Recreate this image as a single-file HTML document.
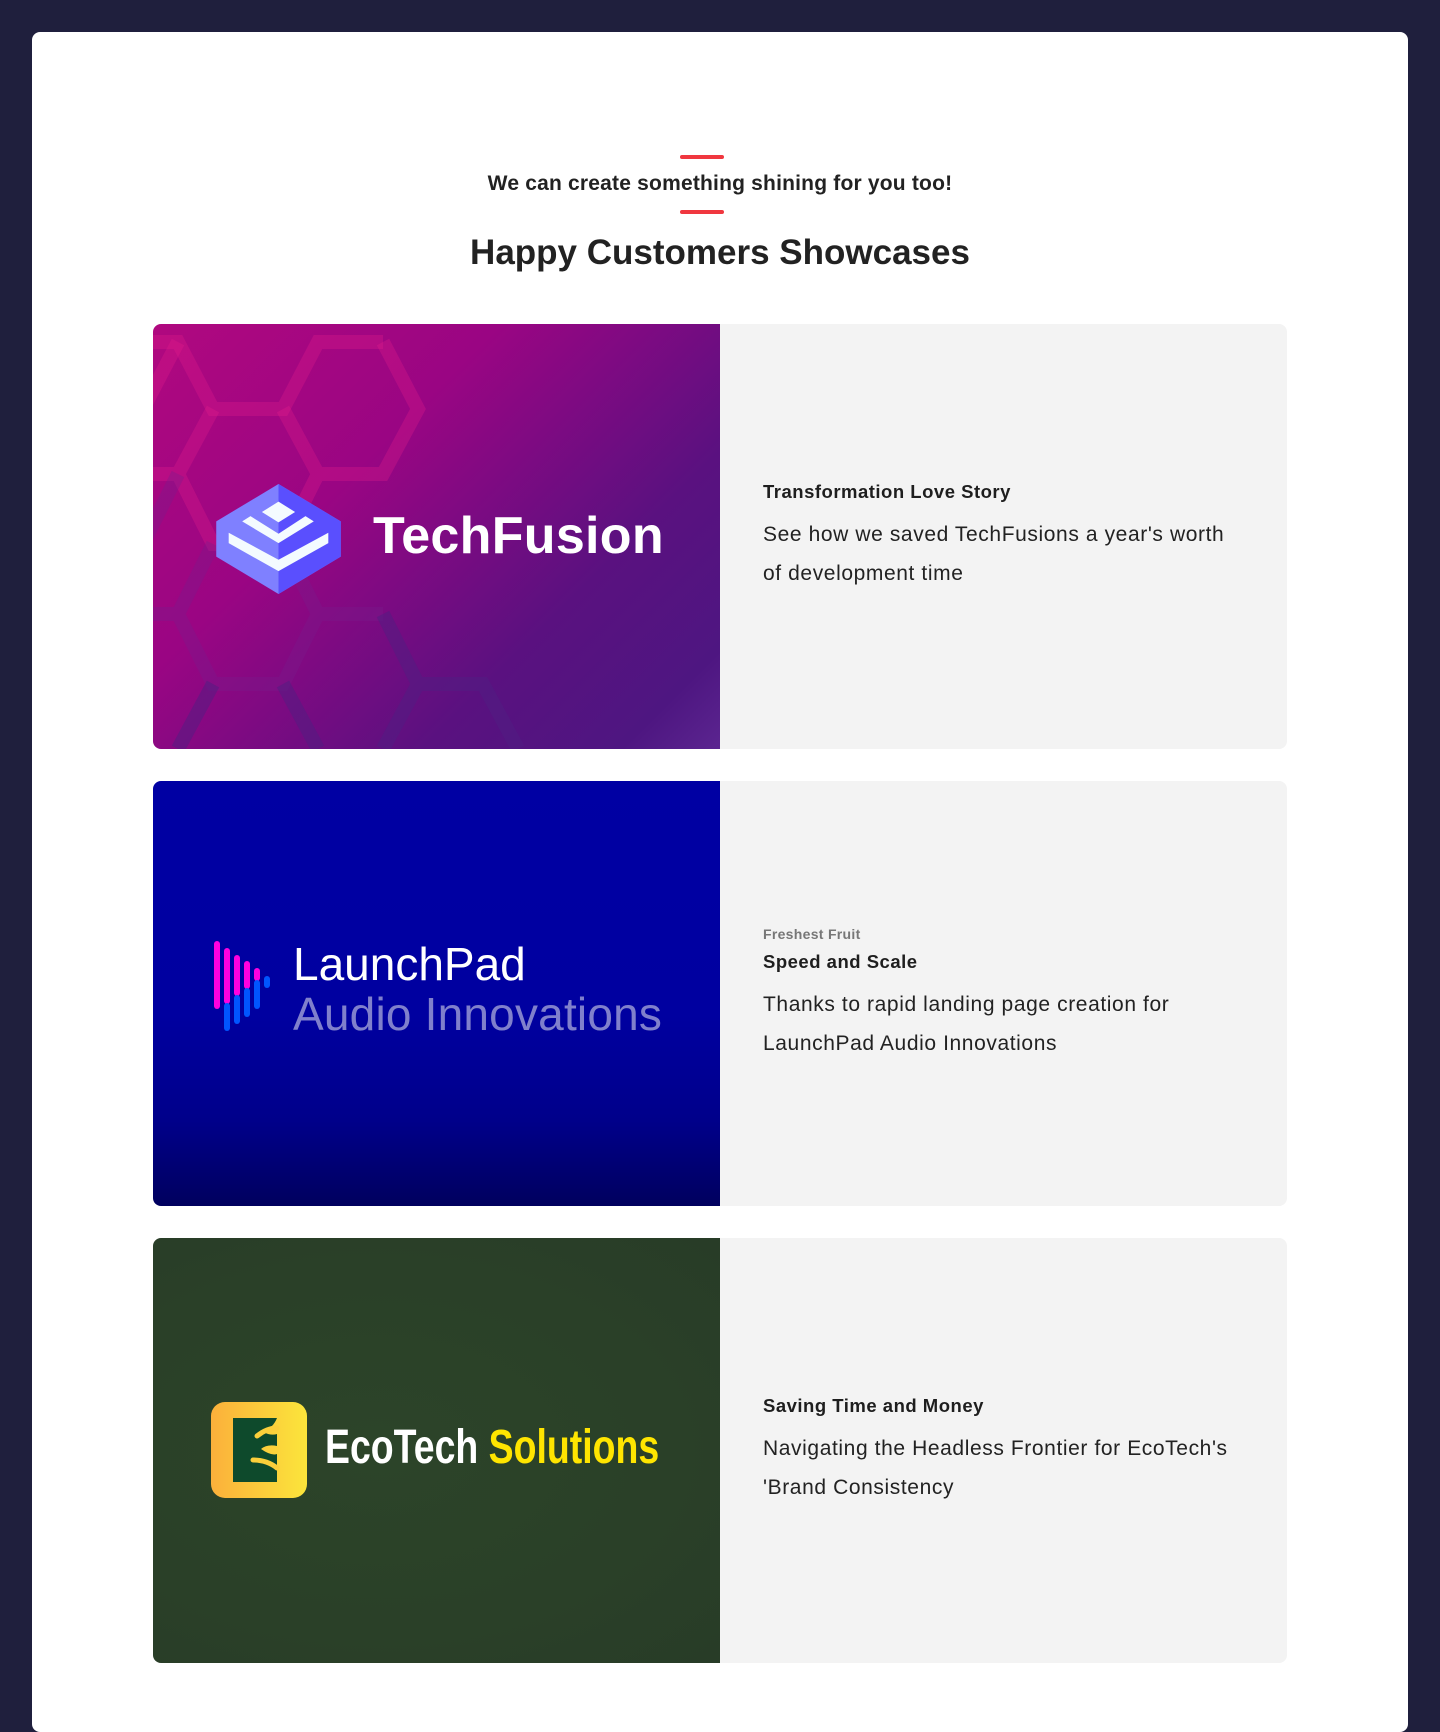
<!DOCTYPE html>
<html><head><meta charset="utf-8"><style>
*{margin:0;padding:0;box-sizing:border-box}
body{width:1440px;height:1658px;background:#1f1f3d;overflow:hidden;font-family:"Liberation Sans",sans-serif;color:#222}
.wrap{position:absolute;left:32px;top:32px;width:1376px;height:1700px;background:#fff;border-radius:8px}
.red{position:absolute;left:680px;width:44px;height:4px;border-radius:2px;background:#f0373f}
.sub{position:absolute;left:0;width:1440px;top:172px;text-align:center;font-size:21px;font-weight:bold;color:#222;letter-spacing:0.2px}
h1{position:absolute;left:0;width:1440px;top:233px;text-align:center;font-size:35px;font-weight:bold;color:#222}
.card{position:absolute;left:153px;width:1134px;height:425px;background:#f3f3f3;border-radius:8px;overflow:hidden}
.img{position:absolute;left:0;top:0;width:567px;height:100%;overflow:hidden}
.txt{position:absolute;left:610px;width:475px}
.t{font-size:18.5px;font-weight:bold;color:#1e1e1e;margin-bottom:12px;letter-spacing:0.5px}
.b{font-size:21px;line-height:39px;color:#222;letter-spacing:0.6px}
.s{font-size:14px;font-weight:bold;color:#777;margin-bottom:9px;letter-spacing:0.3px}
</style></head><body>
<div class="wrap"></div>
<div class="red" style="top:155px"></div>
<div class="sub">We can create something shining for you too!</div>
<div class="red" style="top:210px"></div>
<h1>Happy Customers Showcases</h1>

<div class="card" style="top:324px">
 <div class="img" style="background:linear-gradient(135deg,#b0087f 0%,#9a0583 35%,#5a1180 70%,#4e1681 90%,#5b2590 100%)">
  <svg width="567" height="425" style="position:absolute;left:0;top:0" fill="none" stroke="rgba(230,30,140,0.3)" stroke-width="14">
   <path d="M-20,18 L25,18 L60,85 L130,85 L165,18 L230,18"/>
   <path d="M25,18 L-10,85 M60,85 L25,150 L-20,150 M130,85 L165,150 L130,220 L60,220 L25,150 M165,150 L230,150 L265,85 L230,18"/>
   <path d="M25,150 L-10,220 M60,220 L25,290 L-20,290 M130,220 L165,290 L130,360 L60,360 L25,290 M165,290 L230,290" stroke="rgba(120,30,140,0.35)"/>
   <path d="M130,360 L165,425 M60,360 L25,425 M230,290 L265,360 L230,425 M265,360 L330,360 L365,425" stroke="rgba(80,30,130,0.5)"/>
  </svg>
  <svg width="135" height="110" style="position:absolute;left:58px;top:160px" viewBox="0 0 120 106">
   <polygon points="60,0 120,36 120,70 60,106 0,70 0,36" fill="#7f80ff"/>
   <polygon points="60,0 120,36 120,70 60,106" fill="#5a4ffe"/>
   <polygon points="60,17 76,27 60,37 44,27" fill="#f4fbff"/>
   <polygon points="25,36 33,31 60,48 86,31 94,36 60,57" fill="#f4fbff"/>
   <polygon points="12,47 12,57 60,84 108,57 108,47 60,73" fill="#f4fbff"/>
  </svg>
  <div style="position:absolute;left:220px;top:182px;font-size:52px;font-weight:bold;color:#fff;letter-spacing:0.3px">TechFusion</div>
 </div>
 <div class="txt" style="top:157px"><div class="t">Transformation Love Story</div><div class="b">See how we saved TechFusions a year's worth of development time</div></div>
</div>

<div class="card" style="top:781px">
 <div class="img" style="background:linear-gradient(180deg,#0000a3 0%,#0000a0 55%,#00008a 80%,#00005e 100%)">
  <svg width="60" height="90" style="position:absolute;left:60px;top:160px">
   <g stroke-linecap="round" stroke-width="6">
    <line x1="4" y1="3" x2="4" y2="65" stroke="#ff00e0"/>
    <line x1="14" y1="10" x2="14" y2="60" stroke="#ff00e0"/>
    <line x1="24" y1="17" x2="24" y2="52" stroke="#ff00e0"/>
    <line x1="34" y1="23" x2="34" y2="45" stroke="#ff00e0"/>
    <line x1="44" y1="30" x2="44" y2="37" stroke="#ff00e0"/>
    <line x1="14" y1="65" x2="14" y2="87" stroke="#0055ff"/>
    <line x1="24" y1="57" x2="24" y2="80" stroke="#0055ff"/>
    <line x1="34" y1="50" x2="34" y2="73" stroke="#0055ff"/>
    <line x1="44" y1="42" x2="44" y2="65" stroke="#0055ff"/>
    <line x1="54" y1="38" x2="54" y2="44" stroke="#0055ff"/>
   </g>
  </svg>
  <div style="position:absolute;left:140px;top:158px;font-size:46px;line-height:50px;color:#fff">LaunchPad</div>
  <div style="position:absolute;left:140px;top:208px;font-size:46px;line-height:50px;color:#8080cc;letter-spacing:0.2px">Audio Innovations</div>
 </div>
 <div class="txt" style="top:145px"><div class="s">Freshest Fruit</div><div class="t">Speed and Scale</div><div class="b">Thanks to rapid landing page creation for LaunchPad Audio Innovations</div></div>
</div>

<div class="card" style="top:1238px">
 <div class="img" style="background:radial-gradient(ellipse at 40% 50%,#2c4429 0%,#2a4028 60%,#283c27 100%)">
  <div style="position:absolute;left:58px;top:164px;width:96px;height:96px;border-radius:14px;background:linear-gradient(90deg,#fbb03b,#fbe53b)">
   <svg width="96" height="96" viewBox="0 0 96 96" style="position:absolute;left:0;top:0">
    <path d="M22,16 L66,16 Q62,26 52,30 Q60,34 66,32 L66,44 Q56,42 50,47 Q60,54 66,52 L66,80 L22,80 Z" fill="#0e4a2c"/>
    <path d="M46,34 Q56,26 66,26" stroke="#fbcf3b" stroke-width="5" fill="none" stroke-linecap="round"/>
    <path d="M42,58 Q56,58 66,66" stroke="#fbcf3b" stroke-width="5" fill="none" stroke-linecap="round"/>
   </svg>
  </div>
  <div style="position:absolute;left:172px;top:182px;font-size:48px;font-weight:bold;color:#fff;transform:scaleX(0.78);transform-origin:left top;white-space:nowrap">EcoTech <span style="color:#ffe500">Solutions</span></div>
 </div>
 <div class="txt" style="top:157px"><div class="t">Saving Time and Money</div><div class="b">Navigating the Headless Frontier for EcoTech's 'Brand Consistency</div></div>
</div>
</body></html>
